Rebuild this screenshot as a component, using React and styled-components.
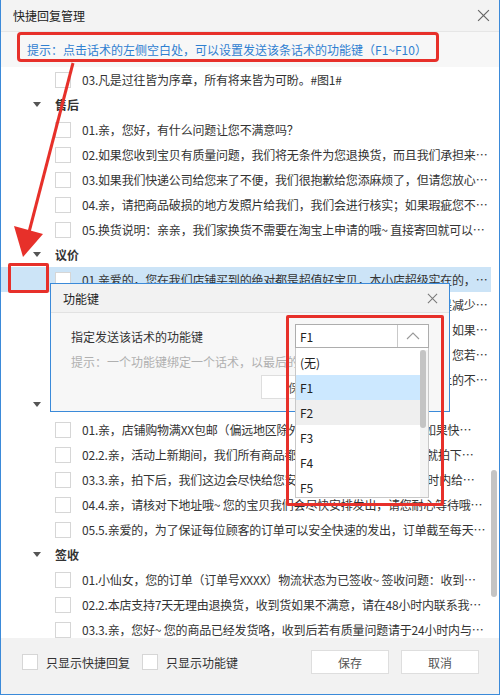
import React from 'react';
import styled, { createGlobalStyle } from 'styled-components';

const GlobalStyle = createGlobalStyle`
  html, body { margin: 0; padding: 0; background: #fff; }
  body {
    font-family: "Microsoft YaHei", "Noto Sans CJK SC", "Noto Sans", sans-serif;
    font-size: 12px;
    color: #333;
  }
`;

const groups = [
  {
    name: '',
    items: ['03.凡是过往皆为序章，所有将来皆为可盼。#图1#'],
    noHeader: true,
  },
  {
    name: '售后',
    items: [
      '01.亲，您好，有什么问题让您不满意吗？',
      '02.如果您收到宝贝有质量问题，我们将无条件为您退换货，而且我们承担来…',
      '03.如果我们快递公司给您来了不便，我们很抱歉给您添麻烦了，但请您放心…',
      '04.亲，请把商品破损的地方发照片给我们，我们会进行核实；如果瑕疵您不…',
      '05.换货说明：亲亲，我们家换货不需要在淘宝上申请的哦~ 直接寄回就可以…',
    ],
  },
  {
    name: '议价',
    items: [
      '01.亲爱的，您在我们店铺买到的绝对都是超值好宝贝，本小店超级实在的，…',
      '02.亲，本店价格已是最低价了哦，利润很薄，只能给您送个小礼品或是减少…',
      '03.亲，我们的宝贝都是正品，质量有保证，价格真的已经很实惠了哦，如果…',
      '04.亲，我们已经是最优惠的价格了，现在还有满减活动可以参加的哦，您若…',
      '05.亲，不好意思哦，小店价格都是统一的，您可以关注我们店铺首页上的不…',
    ],
  },
  {
    name: '催付',
    items: [
      '01.亲，店铺购物满XX包邮（偏远地区除外），本店商品均为现货，如果快…',
      '02.2.亲，活动上新期间，我们所有商品都是限时特惠的，喜欢这款就拍下…',
      '03.3.亲，拍下后，我们这边会尽快给您安排发货，一般都会在48小时内给…',
      '04.4.亲，请核对下地址哦~ 您的宝贝我们会尽快安排发出，请您耐心等待哦…',
      '05.5.亲爱的，为了保证每位顾客的订单可以安全快速的发出，订单截至每天…',
    ],
  },
  {
    name: '签收',
    items: [
      '01.小仙女，您的订单（订单号XXXX）物流状态为已签收~ 签收问题：收到…',
      '02.2.本店支持7天无理由退换货，收到货如果不满意，请在48小时内联系我…',
      '03.3.亲，您好~ 您的商品已经发货咯，收到后若有质量问题请于24小时内与…',
    ],
  },
];

const keys = ['(无)', 'F1', 'F2', 'F3', 'F4', 'F5'];

const Window = styled.div`
  position: relative;
  width: 500px;
  height: 695px;
  box-sizing: border-box;
  border: 1px solid #3b8ad9;
  border-top: none;
  display: flex;
  flex-direction: column;
  overflow: hidden;
  background: #fff;
`;

const TitleBar = styled.div`
  height: 31px;
  flex: none;
  display: flex;
  align-items: center;
  justify-content: space-between;
  padding: 0 8px 0 12px;
  background: #f3f3f3;
  border-bottom: 1px solid #e6e6e6;
`;

const TitleText = styled.span`
  font-size: 12px;
  color: #222;
`;

const CloseIcon = ({ size = 12, color = '#666' }) => (
  <svg width={size} height={size} viewBox="0 0 12 12">
    <path d="M1 1L11 11M11 1L1 11" stroke={color} strokeWidth="1.1" fill="none" />
  </svg>
);

const CloseButton = styled.div`
  width: 16px;
  height: 16px;
  display: flex;
  align-items: center;
  justify-content: center;
`;

const HintBar = styled.div`
  height: 35px;
  flex: none;
  display: flex;
  align-items: center;
  padding: 0 0 0 26px;
  background: #f7f7f7;
  color: #2f80d1;
  font-size: 12px;
`;

const ListArea = styled.div`
  flex: 1;
  display: flex;
  min-height: 0;
  overflow: hidden;
`;

const Rows = styled.div`
  flex: 1;
  min-width: 0;
`;

const ScrollCol = styled.div`
  width: 8px;
  flex: none;
  position: relative;
`;

const ScrollThumb = styled.div`
  position: absolute;
  left: 0;
  width: 6px;
  border-radius: 3px;
  background: #c4c4c4;
  top: ${({ top }) => top}px;
  height: ${({ h }) => h}px;
`;

const GroupHeader = styled.div`
  height: 25px;
  display: flex;
  align-items: center;
  padding-left: 32px;
  font-weight: bold;
  color: #333;
`;

const Caret = styled.span`
  width: 0;
  height: 0;
  border-left: 4px solid transparent;
  border-right: 4px solid transparent;
  border-top: 5px solid #555;
  margin-right: 14px;
`;

const ItemRow = styled.div`
  height: 25px;
  display: flex;
  align-items: center;
  padding-left: 54px;
  background: ${({ selected }) => (selected ? '#cce4f7' : 'transparent')};
`;

const Box = styled.span`
  width: 14px;
  height: 14px;
  flex: none;
  border: 1px solid #d6d6d6;
  background: #fff;
  margin-right: ${({ gap }) => gap || 11}px;
`;

const ItemText = styled.span`
  flex: 1;
  min-width: 0;
  white-space: nowrap;
  overflow: hidden;
  text-overflow: ellipsis;
  line-height: 25px;
  letter-spacing: -0.2px;
`;

const Footer = styled.div`
  height: 56px;
  flex: none;
  box-sizing: border-box;
  display: flex;
  align-items: flex-start;
  padding: 12px 20px 0 21px;
  background: #f2f2f2;
`;

const FooterCheck = styled.label`
  display: flex;
  align-items: center;
  height: 24px;
  margin-right: 12px;
`;

const Spacer = styled.div`
  flex: 1;
`;

const Button = styled.button`
  width: 78px;
  height: 24px;
  box-sizing: border-box;
  border: 1px solid #dedede;
  background: #fff;
  color: #555;
  font-family: inherit;
  font-size: 12px;
  padding: 0;
  margin-left: ${({ ml }) => ml || 0}px;
`;

/* 功能键 popup */
const Dialog = styled.div`
  position: absolute;
  left: 49px;
  top: 283px;
  width: 400px;
  height: 129px;
  box-sizing: border-box;
  border: 1px solid #3b8ad9;
  background: #f7f7f7;
  display: flex;
  flex-direction: column;
`;

const DialogTitle = styled.div`
  height: 28px;
  flex: none;
  display: flex;
  align-items: center;
  justify-content: space-between;
  padding: 0 9px 0 12px;
  background: #f2f2f2;
  border-bottom: 1px solid #e2e2e2;
  color: #222;
`;

const DialogBody = styled.div`
  padding: 11px 20px 0 20px;
`;

const FieldRow = styled.div`
  display: flex;
  align-items: center;
  justify-content: space-between;
  height: 24px;
`;

const DialogHint = styled.div`
  margin-top: 6px;
  line-height: 16px;
  color: #b0b0b0;
  white-space: nowrap;
`;

const DialogButtons = styled.div`
  display: flex;
  justify-content: flex-end;
  margin-top: 5px;
`;

const Select = styled.div`
  position: relative;
  width: 134px;
  height: 24px;
  box-sizing: border-box;
  border: 1px solid #adadad;
  background: #fff;
  display: flex;
`;

const SelectValue = styled.div`
  flex: 1;
  display: flex;
  align-items: center;
  padding-left: 4px;
  color: #222;
`;

const SelectArrow = styled.div`
  width: 30px;
  border-left: 1px solid #c9c9c9;
  display: flex;
  align-items: center;
  justify-content: center;
`;

const DropList = styled.div`
  position: absolute;
  left: -1px;
  top: 23px;
  width: 134px;
  height: 150px;
  box-sizing: border-box;
  border: 1px solid #c8c8c8;
  border-top: none;
  background: #fff;
  display: flex;
  overflow: hidden;
  padding-top: 2px;
`;

const DropItems = styled.div`
  flex: 1;
`;

const DropItem = styled.div`
  height: 25px;
  display: flex;
  align-items: center;
  padding-left: 4px;
  color: #222;
  background: ${({ active, hover }) => (active ? '#cce8ff' : hover ? '#efefef' : '#fff')};
`;

const DropScroll = styled.div`
  width: 8px;
  flex: none;
  position: relative;
  background: #f4f4f4;
`;

/* red callouts drawn on top */
const Mark = styled.div`
  position: absolute;
  box-sizing: border-box;
  border: ${({ w }) => w || 3}px solid #e7302a;
  border-radius: ${({ r }) => r || 3}px;
  pointer-events: none;
  left: ${({ x }) => x}px;
  top: ${({ y }) => y}px;
  width: ${({ wd }) => wd}px;
  height: ${({ ht }) => ht}px;
`;

const ArrowLayer = styled.svg`
  position: absolute;
  left: -1px;
  top: 0;
  pointer-events: none;
`;

const Arrow = () => (
  <ArrowLayer width="500" height="695" viewBox="0 0 500 695">
    <line x1="73" y1="63" x2="28" y2="236" stroke="#e7302a" strokeWidth="3" />
    <polygon points="23,257 14,226 43,234" fill="#e7302a" />
  </ArrowLayer>
);

export default function App() {
  return (
    <>
      <GlobalStyle />
      <Window>
        <TitleBar>
          <TitleText>快捷回复管理</TitleText>
          <CloseButton><CloseIcon size={13} /></CloseButton>
        </TitleBar>
        <HintBar>提示：点击话术的左侧空白处，可以设置发送该条话术的功能键（F1~F10）</HintBar>
        <ListArea>
          <Rows>
            {groups.map((g, gi) => (
              <React.Fragment key={gi}>
                {!g.noHeader && (
                  <GroupHeader>
                    <Caret />
                    {g.name}
                  </GroupHeader>
                )}
                {g.items.map((t, i) => (
                  <ItemRow key={i} selected={g.name === '议价' && i === 0}>
                    <Box />
                    <ItemText>{t}</ItemText>
                  </ItemRow>
                ))}
              </React.Fragment>
            ))}
          </Rows>
          <ScrollCol>
            <ScrollThumb top={403} h={127} />
          </ScrollCol>
        </ListArea>
        <Footer>
          <FooterCheck><Box gap={8} />只显示快捷回复</FooterCheck>
          <FooterCheck><Box gap={8} />只显示功能键</FooterCheck>
          <Spacer />
          <Button>保存</Button>
          <Button ml={12}>取消</Button>
        </Footer>

        <Dialog>
          <DialogTitle>
            <span>功能键</span>
            <CloseButton><CloseIcon size={11} color="#777" /></CloseButton>
          </DialogTitle>
          <DialogBody>
            <FieldRow>
              <span>指定发送该话术的功能键</span>
              <Select>
                <SelectValue>F1</SelectValue>
                <SelectArrow>
                  <svg width="14" height="8" viewBox="0 0 14 8">
                    <path d="M1 7L7 1L13 7" stroke="#999" strokeWidth="1.1" fill="none" />
                  </svg>
                </SelectArrow>
                <DropList>
                  <DropItems>
                    {keys.map((k) => (
                      <DropItem key={k} active={k === 'F1'} hover={k === 'F2'}>{k}</DropItem>
                    ))}
                  </DropItems>
                  <DropScroll>
                    <ScrollThumb top={0} h={78} />
                  </DropScroll>
                </DropList>
              </Select>
            </FieldRow>
            <DialogHint>提示：一个功能键绑定一个话术，以最后的设置为准</DialogHint>
            <DialogButtons>
              <Button>保存</Button>
              <Button ml={12}>取消</Button>
            </DialogButtons>
          </DialogBody>
        </Dialog>

        <Mark x={16} y={32} wd={422} ht={30} w={3} r={4} />
        <Mark x={7} y={263} wd={41} ht={30} w={3} r={2} />
        <Mark x={285} y={315} wd={158} ht={191} w={3} r={2} />
        <Arrow />
      </Window>
    </>
  );
}
